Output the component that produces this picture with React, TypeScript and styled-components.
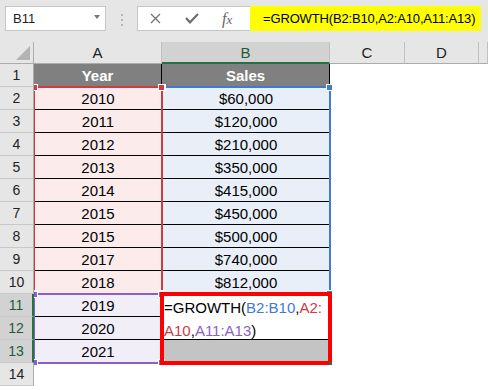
import React from 'react';
import styled, { createGlobalStyle } from 'styled-components';

const Global = createGlobalStyle`
  html, body { margin: 0; padding: 0; background: #fff; }
  body { font-family: "Liberation Sans", Arial, sans-serif; }
`;

const Page = styled.div`
  width: 488px;
  height: 390px;
  overflow: hidden;
  background: #fff;
`;

const Toolbar = styled.div`
  height: 42px;
  box-sizing: border-box;
  background: #e6e6e6;
  display: flex;
  align-items: flex-start;
  padding: 6px 0 0 5px;
`;

const NameBox = styled.div`
  width: 101px;
  height: 25px;
  box-sizing: border-box;
  background: #fff;
  border: 1px solid #c6c6c6;
  display: flex;
  align-items: center;
  justify-content: space-between;
  padding: 0 5px 0 7px;
  font-size: 13px;
  color: #222;
`;

const Caret = styled.span`
  width: 0;
  height: 0;
  border-left: 3.5px solid transparent;
  border-right: 3.5px solid transparent;
  border-top: 4px solid #777;
  margin-bottom: 3px;
`;

const Grip = styled.div`
  width: 31px;
  display: flex;
  flex-direction: column;
  align-items: center;
  gap: 3px;
  padding-top: 8px;
`;

const GripDot = styled.span`
  width: 2px;
  height: 2px;
  background: #b5b5b5;
`;

const FxBox = styled.div`
  width: 113px;
  height: 25px;
  box-sizing: border-box;
  background: #fff;
  border: 1px solid #c6c6c6;
  border-right: none;
  display: flex;
  align-items: center;
  gap: 24px;
  padding-left: 12px;
`;

const FxLabel = styled.i`
  font-family: "Liberation Serif", "Times New Roman", serif;
  font-size: 16px;
  color: #666;
  margin-left: -1px;
  line-height: 1;
`;

const FxSub = styled.span`
  font-size: 13px;
`;

const FormulaInput = styled.div`
  width: 231px;
  height: 25px;
  box-sizing: border-box;
  background: #ffff00;
  padding-left: 13px;
  font-size: 13px;
  letter-spacing: -0.15px;
  line-height: 25px;
  color: #000;
  white-space: nowrap;
`;

const Sheet = styled.div`
  display: grid;
  grid-template-columns: 34px 128px 168px 75px 74px 9px;
  grid-template-rows: 22px repeat(14, 23px);
`;

const Corner = styled.div`
  grid-row: 1;
  grid-column: 1;
  box-sizing: border-box;
  background: #e6e6e6;
  border-right: 1px solid #ababab;
  border-bottom: 1px solid #ababab;
  display: flex;
  align-items: flex-end;
  justify-content: flex-end;
  padding: 0 3px 3px 0;
  position: relative;
  z-index: 5;
`;

const CornerTri = styled.span`
  width: 0;
  height: 0;
  border-left: 14px solid transparent;
  border-bottom: 14px solid #b4b4b4;
`;

const ColHead = styled.div<{ $col: number; $active?: boolean }>`
  grid-row: 1;
  grid-column: ${p => p.$col};
  box-sizing: border-box;
  background: ${p => (p.$active ? '#d2d2d2' : '#e6e6e6')};
  color: ${p => (p.$active ? '#1d5c3a' : '#222')};
  border-right: 1px solid #c0c0c0;
  border-bottom: ${p => (p.$active ? '2px solid #217346' : '1px solid #ababab')};
  font-size: 15px;
  line-height: 21px;
  text-align: center;
  position: relative;
  z-index: 5;
`;

const RowHead = styled.div<{ $row: number; $active?: boolean }>`
  grid-row: ${p => p.$row};
  grid-column: 1;
  box-sizing: border-box;
  background: ${p => (p.$active ? '#d2d2d2' : '#e6e6e6')};
  color: ${p => (p.$active ? '#1d5c3a' : '#222')};
  border-right: ${p => (p.$active ? '2px solid #217346' : '1px solid #ababab')};
  border-bottom: 1px solid #c8c8c8;
  font-size: 14px;
  line-height: 22px;
  text-align: center;
  position: relative;
  z-index: 5;
`;

type CellProps = {
  $row: number | string;
  $col: number;
  $bg?: string;
  $bold?: boolean;
  $color?: string;
  $line?: boolean;
  $vline?: boolean;
};

const Cell = styled.div<CellProps>`
  grid-row: ${p => p.$row};
  grid-column: ${p => p.$col};
  box-sizing: border-box;
  background: ${p => p.$bg ?? '#fff'};
  color: ${p => p.$color ?? '#000'};
  font-weight: ${p => (p.$bold ? 700 : 400)};
  text-align: center;
  font-size: 15px;
  line-height: 22px;
  padding-top: 1px;
  border-bottom: ${p => (p.$line ? '1px solid #000' : 'none')};
  border-right: ${p => (p.$vline ? '1px solid #000' : 'none')};
  white-space: nowrap;
  overflow: hidden;
`;

const FormulaCell = styled.div`
  grid-row: 12 / 14;
  grid-column: 3;
  box-sizing: border-box;
  background: #fff;
  border-bottom: 1px solid #000;
  padding: 2px 0 0 2px;
  font-size: 15px;
  line-height: 23px;
  text-align: left;
  white-space: nowrap;
  overflow: hidden;
  color: #000;
`;

const Ref = styled.span<{ $c: string }>`
  color: ${p => p.$c};
`;

const Range = styled.div<{ $row: string; $col: number; $c: string; $w?: number; $m?: number; $z?: number }>`
  grid-row: ${p => p.$row};
  grid-column: ${p => p.$col};
  margin: ${p => -(p.$m ?? 1)}px;
  border: ${p => p.$w ?? 2}px solid ${p => p.$c};
  position: relative;
  z-index: ${p => p.$z ?? 2};
  pointer-events: none;
`;

const Handle = styled.span<{ $c: string; $v: 'top' | 'bottom'; $h: 'left' | 'right' }>`
  position: absolute;
  width: 5px;
  height: 5px;
  background: ${p => p.$c};
  border: 1px solid #fff;
  ${p => p.$v}: -4px;
  ${p => p.$h}: -4px;
`;

const FillHandle = styled.span`
  position: absolute;
  right: -4px;
  bottom: -4px;
  width: 3px;
  height: 3px;
  background: #217346;
`;

const RED = '#cf3a44';
const BLUE = '#3d7bd4';
const PURPLE = '#8a60c8';

const years = ['2010', '2011', '2012', '2013', '2014', '2015', '2015', '2017', '2018'];
const sales = ['$60,000', '$120,000', '$210,000', '$350,000', '$415,000', '$450,000', '$500,000', '$740,000', '$812,000'];
const future = ['2019', '2020', '2021'];

const Handles = ({ c }: { c: string }) => (
  <>
    <Handle $c={c} $v="top" $h="left" />
    <Handle $c={c} $v="top" $h="right" />
    <Handle $c={c} $v="bottom" $h="left" />
    <Handle $c={c} $v="bottom" $h="right" />
  </>
);

export default function App() {
  const cols = ['A', 'B', 'C', 'D', ''];
  return (
    <Page>
      <Global />
      <Toolbar>
        <NameBox>
          <span>B11</span>
          <Caret />
        </NameBox>
        <Grip>
          <GripDot />
          <GripDot />
          <GripDot />
        </Grip>
        <FxBox>
          <svg width="11" height="11" viewBox="0 0 11 11">
            <path d="M1 1 L10 10 M10 1 L1 10" stroke="#777" strokeWidth="1.4" fill="none" />
          </svg>
          <svg width="14" height="11" viewBox="0 0 14 11">
            <polyline points="1,5 5,9.3 13,1" stroke="#6e6e6e" strokeWidth="2.2" fill="none" />
          </svg>
          <FxLabel>
            f<FxSub>x</FxSub>
          </FxLabel>
        </FxBox>
        <FormulaInput>=GROWTH(B2:B10,A2:A10,A11:A13)</FormulaInput>
      </Toolbar>

      <Sheet>
        <Corner>
          <CornerTri />
        </Corner>
        {cols.map((c, i) => (
          <ColHead key={i} $col={i + 2} $active={c === 'B'}>
            {c}
          </ColHead>
        ))}
        {Array.from({ length: 14 }, (_, i) => (
          <RowHead key={i} $row={i + 2} $active={i + 1 >= 11 && i + 1 <= 13}>
            {i + 1}
          </RowHead>
        ))}

        <Cell $row={2} $col={2} $bg="#808080" $color="#fff" $bold $vline>Year</Cell>
        <Cell $row={2} $col={3} $bg="#808080" $color="#fff" $bold $vline>Sales</Cell>

        {years.map((y, i) => (
          <Cell key={'a' + i} $row={i + 3} $col={2} $bg="#fbebeb" $line={i < 8}>
            {y}
          </Cell>
        ))}
        {sales.map((s, i) => (
          <Cell key={'b' + i} $row={i + 3} $col={3} $bg="#e9eff9" $line={i < 8}>
            {s}
          </Cell>
        ))}
        {future.map((y, i) => (
          <Cell key={'f' + i} $row={i + 12} $col={2} $bg="#f1eef8" $line={i < 2}>
            {y}
          </Cell>
        ))}

        <FormulaCell>
          =GROWTH(<Ref $c={BLUE}>B2:B10</Ref>,<Ref $c={RED}>A2:</Ref>
          <br />
          <Ref $c={RED}>A10</Ref>,<Ref $c={PURPLE}>A11:A13</Ref>)
        </FormulaCell>
        <Cell $row={14} $col={3} $bg="#c4c4c4" />

        <Range $row="3 / 12" $col={3} $c={BLUE}>
          <Handles c={BLUE} />
        </Range>
        <Range $row="3 / 12" $col={2} $c={RED}>
          <Handles c={RED} />
        </Range>
        <Range $row="12 / 15" $col={2} $c={PURPLE}>
          <Handles c={PURPLE} />
        </Range>
        <Range $row="12 / 15" $col={3} $c="#ff0000" $w={4} $m={2} $z={4}>
          <FillHandle />
        </Range>
      </Sheet>
    </Page>
  );
}
